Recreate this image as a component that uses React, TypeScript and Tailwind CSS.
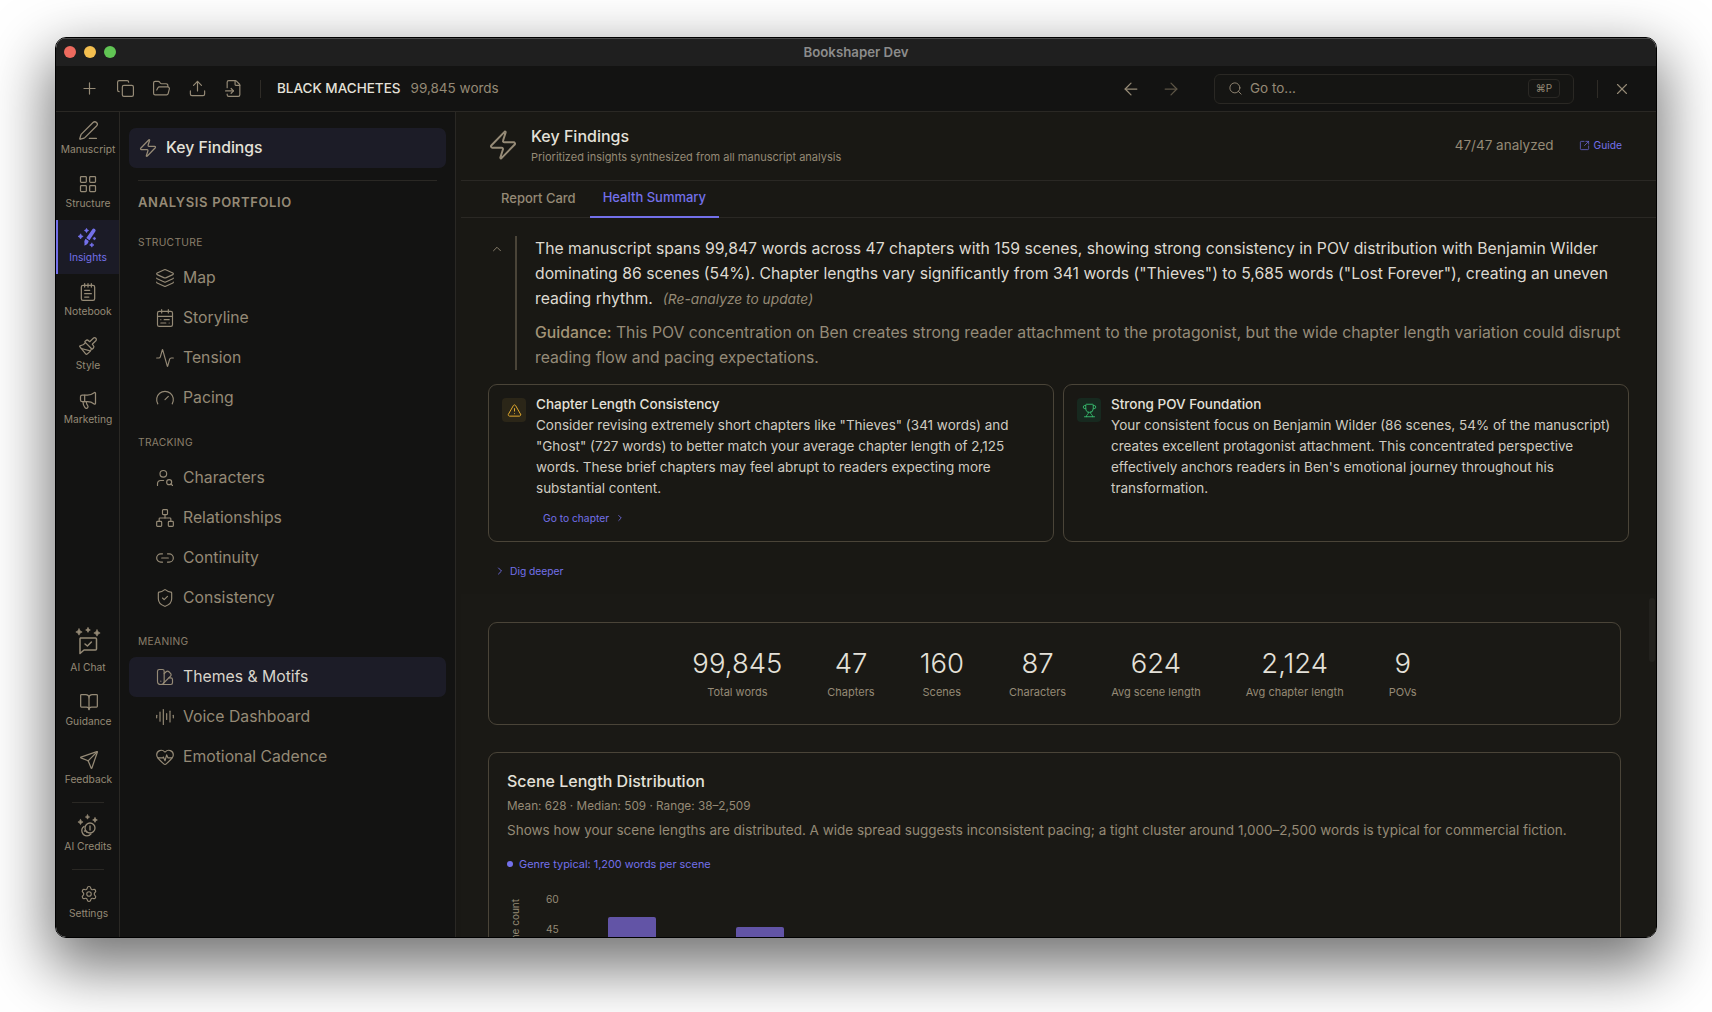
import React from "react";
import {
  Plus, Copy, FolderOpen, Upload, FileInput, ArrowLeft, ArrowRight, Search, X, PenLine, LayoutGrid,
  NotepadText, Paintbrush, Megaphone, BookOpen, Send, Settings, Zap, Layers, CalendarRange, Activity,
  Gauge, UserSearch, Network, Link2, ShieldCheck, SwatchBook, AudioLines, HeartPulse, ChevronUp,
  ChevronRight, TriangleAlert, Trophy, SquareArrowOutUpRight,
} from "lucide-react";

const Star = ({ x, y, r }: { x: number; y: number; r: number }) => (
  <path
    d={`M${x} ${y - r}Q${x + r * 0.2} ${y - r * 0.2} ${x + r} ${y}Q${x + r * 0.2} ${y + r * 0.2} ${x} ${y + r}Q${x - r * 0.2} ${y + r * 0.2} ${x - r} ${y}Q${x - r * 0.2} ${y - r * 0.2} ${x} ${y - r}Z`}
    fill="currentColor"
    stroke="currentColor"
    strokeWidth="0.6"
    strokeLinejoin="round"
  />
);

const InsightsIcon = () => (
  <svg width="22" height="22" viewBox="0 0 22 22" className="text-[#7370ea]" fill="currentColor">
    <path d="M15.2 2.4a1.9 1.9 0 0 1 3.1 2.2l-5.8 8.6-3.2-2.3z" />
    <path d="M8.6 11.7l3.1 2.2c-.3 2.2-1.9 4.2-4.5 4.6.5-.9.4-1.8.2-2.7-.3-1.5.2-3 1.2-4.1z" />
    <Star x={9.5} y={3.5} r={2.2} />
    <Star x={3.6} y={9.4} r={2.6} />
    <Star x={17.4} y={11.5} r={1.6} />
    <Star x={14.8} y={18} r={2.2} />
  </svg>
);

const ChatIcon = () => (
  <svg width="28" height="28" viewBox="0 0 28 28" fill="none" stroke="currentColor" strokeWidth="1.5" strokeLinecap="round" strokeLinejoin="round">
    <Star x={5} y={5} r={3.2} />
    <Star x={14} y={3} r={2.4} />
    <Star x={23} y={6} r={3.2} />
    <path d="M6.5 11h15a1 1 0 0 1 1 1v10a1 1 0 0 1-1 1H10l-4 3.5V12a1 1 0 0 1 .5-1z" />
    <path d="M11 17l2.4 2 4-4" />
  </svg>
);

const CreditsIcon = () => (
  <svg width="24" height="24" viewBox="0 0 24 24" fill="none" stroke="currentColor" strokeWidth="1.3" strokeLinecap="round" strokeLinejoin="round">
    <Star x={4.5} y={8} r={2.6} />
    <Star x={11.5} y={3} r={2.2} />
    <Star x={19} y={6} r={2.4} />
    <circle cx="14" cy="14" r="5" />
    <path d="M14 12v4" />
    <path d="M8 12.5a5.2 5.2 0 0 0 3 9.4 5 5 0 0 0 4-2" />
    <path d="M8.5 17a2 2 0 0 1 2.3 1.2" />
  </svg>
);

const railTop = [
  { label: "Manuscript", icon: <PenLine size={21} strokeWidth={1.5} /> },
  { label: "Structure", icon: <LayoutGrid size={20} strokeWidth={1.5} /> },
  { label: "Insights", icon: <InsightsIcon />, active: true },
  { label: "Notebook", icon: <NotepadText size={20} strokeWidth={1.5} /> },
  { label: "Style", icon: <Paintbrush size={20} strokeWidth={1.5} /> },
  { label: "Marketing", icon: <Megaphone size={20} strokeWidth={1.5} /> },
];

const RailItem = ({ label, icon, active }: { label: string; icon: React.ReactNode; active?: boolean }) => (
  <div
    className={`relative flex h-[54px] w-full flex-col items-center justify-end pb-[10px] pl-px ${active ? "bg-[#1b1b26] text-[#7370ea]" : "text-[#958a76]"}`}
  >
    {active && <div className="absolute left-0 top-0 h-full w-[2px] bg-[#7370ea]" />}
    <div className="flex h-[20px] items-center justify-center">{icon}</div>
    <div className="mt-[2px] text-[10.25px] leading-[14px]">{label}</div>
  </div>
);

const sections = [
  {
    title: "STRUCTURE",
    items: [
      ["Map", Layers],
      ["Storyline", CalendarRange],
      ["Tension", Activity],
      ["Pacing", Gauge],
    ],
  },
  {
    title: "TRACKING",
    items: [
      ["Characters", UserSearch],
      ["Relationships", Network],
      ["Continuity", Link2],
      ["Consistency", ShieldCheck],
    ],
  },
  {
    title: "MEANING",
    items: [
      ["Themes & Motifs", SwatchBook],
      ["Voice Dashboard", AudioLines],
      ["Emotional Cadence", HeartPulse],
    ],
  },
] as const;

const stats = [
  ["99,845", "Total words"],
  ["47", "Chapters"],
  ["160", "Scenes"],
  ["87", "Characters"],
  ["624", "Avg scene length"],
  ["2,124", "Avg chapter length"],
  ["9", "POVs"],
];

const Card = ({ icon, iconClass, title, body, link }: { icon: React.ReactNode; iconClass: string; title: string; body: string; link?: boolean }) => (
  <div className="flex h-[158px] flex-1 gap-[10px] rounded-[9px] border border-[#4a4438] pl-[13px] pr-[12px] pt-[9px]">
    <div className={`mt-[4px] flex h-[24px] w-[24px] shrink-0 items-center justify-center rounded-[4px] ${iconClass}`}>{icon}</div>
    <div className="min-w-0 flex-1">
      <div className="text-[13.5px] font-medium leading-[21px] text-[#e4e1d9]">{title}</div>
      <div className="text-[13.5px] leading-[21px] text-[#cfcbc1]">{body}</div>
      {link && (
        <div className="mt-[11px] flex items-center gap-[6px] pl-[7px] text-[10.25px] leading-[16px] text-[#7370ea]">
          Go to chapter <ChevronRight size={10} strokeWidth={2} />
        </div>
      )}
    </div>
  </div>
);

export default function App() {
  return (
    <div className="h-[1012px] w-[1712px] overflow-hidden bg-white pl-[55px] pt-[37px] font-['Inter',sans-serif]">
      <div className="flex h-[901px] w-[1602px] flex-col overflow-hidden rounded-[11px] border border-black shadow-[0_24px_60px_6px_rgba(0,0,0,0.55)]">
        {/* Title bar */}
        <div className="relative flex h-[28px] shrink-0 items-center justify-center border-t border-[#4b4b4b] bg-[#1f1f1f]">
          <div className="absolute left-[8px] top-[7px] flex gap-[8px]">
            <div className="h-[12px] w-[12px] rounded-full bg-[#ed6a5e]" />
            <div className="h-[12px] w-[12px] rounded-full bg-[#f4bf4f]" />
            <div className="h-[12px] w-[12px] rounded-full bg-[#61c554]" />
          </div>
          <div className="text-[13.25px] font-semibold text-[#8c8c8c]">Bookshaper Dev</div>
        </div>

        {/* Toolbar */}
        <div className="flex h-[46px] shrink-0 items-center border-b border-[#2a2824] bg-[#131312] text-[#958a76]">
          <div className="flex items-center gap-[17px] pl-[24px]">
            <Plus size={19} strokeWidth={1.5} />
            <Copy size={19} strokeWidth={1.5} />
            <FolderOpen size={19} strokeWidth={1.5} />
            <Upload size={19} strokeWidth={1.5} />
            <FileInput size={19} strokeWidth={1.5} />
          </div>
          <div className="ml-[17px] h-[18px] w-px bg-[#2f2c27]" />
          <div className="ml-[16px] text-[13.5px] font-medium text-[#e4e1d9]">BLACK MACHETES</div>
          <div className="ml-[10px] text-[13.5px] text-[#958a76]">99,845 words</div>
          <div className="ml-auto flex items-center gap-[20px]">
            <ArrowLeft size={20} strokeWidth={1.5} className="text-[#958a76]" />
            <ArrowRight size={20} strokeWidth={1.5} className="text-[#5c5445]" />
          </div>
          <div className="ml-[33px] flex h-[30px] w-[360px] items-center rounded-[6px] border border-[#2a2824] bg-[#151513] pl-[13px] pr-[13px]">
            <Search size={15} strokeWidth={1.5} />
            <span className="ml-[7px] text-[13.5px]">Go to...</span>
            <span className="ml-auto flex h-[19px] w-[32px] items-center justify-center rounded-[4px] border border-[#2a2824] text-[10px]">⌘P</span>
          </div>
          <div className="ml-[23px] h-[18px] w-px bg-[#2f2c27]" />
          <X size={18} strokeWidth={1.5} className="ml-[15px] mr-[25px]" />
        </div>

        {/* Body */}
        <div className="flex min-h-0 flex-1">
          {/* Rail */}
          <div className="flex w-[64px] shrink-0 flex-col justify-between border-r border-[#2a2824] bg-[#131312] pb-[7px]">
            <div>
              {railTop.map((r) => (
                <RailItem key={r.label} {...r} />
              ))}
            </div>
            <div className="flex flex-col items-center gap-[4px] pl-px text-[#958a76]">
              <div className="flex h-[54px] w-full flex-col items-center justify-end pb-[6px]">
                <ChatIcon />
                <div className="mt-[5px] text-[10.25px] leading-[14px]">AI Chat</div>
              </div>
              <RailItem label="Guidance" icon={<BookOpen size={20} strokeWidth={1.5} />} />
              <RailItem label="Feedback" icon={<Send size={20} strokeWidth={1.5} />} />
              <div className="mb-[2px] mt-[2px] h-px w-[32px] bg-[#2a2824]" />
              <div className="flex h-[54px] w-full flex-col items-center justify-end pb-[10px]">
                <CreditsIcon />
                <div className="mt-[1px] text-[10.25px] leading-[14px]">AI Credits</div>
              </div>
              <div className="mb-[2px] mt-[2px] h-px w-[32px] bg-[#2a2824]" />
              <RailItem label="Settings" icon={<Settings size={18} strokeWidth={1.5} />} />
            </div>
          </div>

          {/* Sidebar */}
          <div className="w-[336px] shrink-0 border-r border-[#2a2824] bg-[#131312] px-[9px] pt-[16px]">
            <div className="flex h-[40px] items-center gap-[8px] rounded-[7px] bg-[#1c1c27] pl-[9px] text-[15.75px] font-medium text-[#e4e1d9]">
              <Zap size={20} strokeWidth={1.5} className="text-[#958a76]" />
              Key Findings
            </div>
            <div className="mx-[9px] mt-[12px] h-px bg-[#2a2824]" />
            <div className="mt-[12px] px-[9px] text-[13px] font-semibold leading-[18px] tracking-[0.65px] text-[#958a76]">ANALYSIS PORTFOLIO</div>
            <div className="mt-[24px] flex flex-col gap-[16.5px]">
              {sections.map((s) => (
                <div key={s.title}>
                  <div className="px-[9px] text-[10.25px] leading-[14px] tracking-[0.3px] text-[#8a7f6b]">{s.title}</div>
                  <div className="mt-[9px]">
                    {s.items.map(([name, Icon]) => {
                      const active = name === "Themes & Motifs";
                      return (
                        <div
                          key={name}
                          className={`flex h-[40px] items-center gap-[8px] rounded-[7px] pl-[26px] text-[15.75px] ${active ? "bg-[#1c1c27] text-[#d8d5cc]" : "text-[#958a76]"}`}
                        >
                          <Icon size={20} strokeWidth={1.4} className="text-[#958a76]" />
                          {name}
                        </div>
                      );
                    })}
                  </div>
                </div>
              ))}
            </div>
          </div>

          {/* Main */}
          <div className="relative min-w-0 flex-1 overflow-hidden bg-[#191814] pl-[5px]">
            <div className="flex h-[69px] items-center border-b border-[#2a2824] pb-[3px] pl-[26px] pr-[34px]">
              <Zap size={32} strokeWidth={1.5} className="mt-px text-[#958a76]" />
              <div className="ml-[12px]">
                <div className="text-[16px] font-medium leading-[23px] text-[#e4e1d9]">Key Findings</div>
                <div className="mt-px text-[11px] leading-[16px] text-[#958a76]">Prioritized insights synthesized from all manuscript analysis</div>
              </div>
              <div className="ml-auto mt-px text-[13.5px] text-[#958a76]">47/47 analyzed</div>
              <div className="ml-[25px] mt-px flex items-center gap-[4px] pt-[1px] text-[10.25px] text-[#7370ea]">
                <SquareArrowOutUpRight size={11} strokeWidth={1.5} />
                Guide
              </div>
            </div>

            <div className="flex h-[37px] items-stretch gap-[2px] border-b border-[#2a2824] pl-[28px]">
              <div className="flex items-center px-[12px] pb-px text-[13px] font-medium text-[#958a76]">Report Card</div>
              <div className="-mb-px flex items-center border-b-2 border-[#7370ea] px-[13px] pb-px text-[13px] font-medium text-[#7370ea]">Health Summary</div>
            </div>

            {/* Summary */}
            <div className="flex pl-[29px] pr-[28px] pt-[18px]">
              <ChevronUp size={14} strokeWidth={1.5} className="mt-[6px] shrink-0 text-[#958a76]" />
              <div className="ml-[11px] w-[2px] shrink-0 bg-[#4a4438]" />
              <div className="ml-[18px] min-w-0 flex-1 pb-0 text-[15.75px] leading-[25px]">
                <p className="text-[#dedad1]">
                  The manuscript spans 99,847 words across 47 chapters with 159 scenes, showing strong consistency in POV distribution with Benjamin Wilder dominating 86 scenes (54%). Chapter lengths vary significantly from 341 words ("Thieves") to 5,685 words ("Lost Forever"), creating an uneven reading rhythm.
                  <em className="ml-[10px] text-[13.75px] leading-[20px] text-[#958a76]">(Re-analyze to update)</em>
                </p>
                <p className="mt-[9px] text-[#958b79]">
                  <span className="font-medium text-[#a39477]">Guidance:</span> This POV concentration on Ben creates strong reader attachment to the protagonist, but the wide chapter length variation could disrupt reading flow and pacing expectations.
                </p>
              </div>
            </div>

            <div className="flex gap-[9px] pl-[27px] pr-[27px] pt-[14px]">
              <Card
                icon={<TriangleAlert size={15} strokeWidth={1.6} className="text-[#e0a92e]" />}
                iconClass="bg-[#2b2618]"
                title="Chapter Length Consistency"
                body={'Consider revising extremely short chapters like "Thieves" (341 words) and "Ghost" (727 words) to better match your average chapter length of 2,125 words. These brief chapters may feel abrupt to readers expecting more substantial content.'}
                link
              />
              <Card
                icon={<Trophy size={15} strokeWidth={1.6} className="text-[#36b36a]" />}
                iconClass="bg-[#17291f]"
                title="Strong POV Foundation"
                body="Your consistent focus on Benjamin Wilder (86 scenes, 54% of the manuscript) creates excellent protagonist attachment. This concentrated perspective effectively anchors readers in Ben's emotional journey throughout his transformation."
              />
            </div>

            <div className="flex items-center gap-[4px] pl-[33px] pt-[21px] text-[10.25px] leading-[16px] text-[#7370ea]">
              <ChevronRight size={12} strokeWidth={1.8} />
              Dig deeper
            </div>

            {/* Lower */}
            <div className="mt-[15px] bg-[#1a1915] pb-[20px] pl-[27px] pr-[35px] pt-[28px]">
              <div className="flex h-[103px] items-start justify-center gap-x-[45px] rounded-[9px] border border-[#4a4438] pt-[22px]">
                {stats.map(([v, l]) => (
                  <div key={l} className="flex flex-col items-center">
                    <div className="text-[27.5px] font-light leading-[36px] text-[#e4e1d9]">{v}</div>
                    <div className="mt-[3px] text-[11px] leading-[16px] text-[#958a76]">{l}</div>
                  </div>
                ))}
              </div>

              <div className="mt-[27px] h-[300px] rounded-[9px] border border-[#4a4438] pl-[18px] pr-[17px] pt-[16px]">
                <div className="text-[16px] font-medium leading-[24px] text-[#e4e1d9]">Scene Length Distribution</div>
                <div className="mt-[5px] text-[11.75px] leading-[16px] text-[#958a76]">Mean: 628 · Median: 509 · Range: 38–2,509</div>
                <div className="mt-[6px] text-[13.5px] leading-[20px] text-[#958a76]">
                  Shows how your scene lengths are distributed. A wide spread suggests inconsistent pacing; a tight cluster around 1,000–2,500 words is typical for commercial fiction.
                </div>
                <div className="mt-[16px] flex items-center gap-[6px] text-[10.9px] leading-[16px] text-[#7370ea]">
                  <span className="h-[6px] w-[6px] rounded-full bg-[#7370ea]" />
                  Genre typical: 1,200 words per scene
                </div>
                <div className="mt-[20px] flex items-start">
                  <div className="w-[16px] pt-[7px]">
                    <div className="rotate-180 whitespace-nowrap text-[10px] leading-[16px] text-[#958a76] [writing-mode:vertical-rl]">Scene count</div>
                  </div>
                  <div className="ml-[23px] flex w-[14px] flex-col gap-[16px] text-[10.25px] leading-[14px] text-[#958a76]">
                    <div>60</div>
                    <div>45</div>
                  </div>
                  <div className="ml-[48px] mt-[25px] h-[60px] w-[48px] rounded-t-[2px] bg-[#6254a6]" />
                  <div className="ml-[80px] mt-[35px] h-[60px] w-[48px] rounded-t-[2px] bg-[#6254a6]" />
                </div>
              </div>
            </div>

            {/* Scrollbar thumb */}
            <div className="absolute right-[1px] top-[486px] h-[64px] w-[6px] rounded-full bg-[#22211d]" />
          </div>
        </div>
      </div>
    </div>
  );
}
